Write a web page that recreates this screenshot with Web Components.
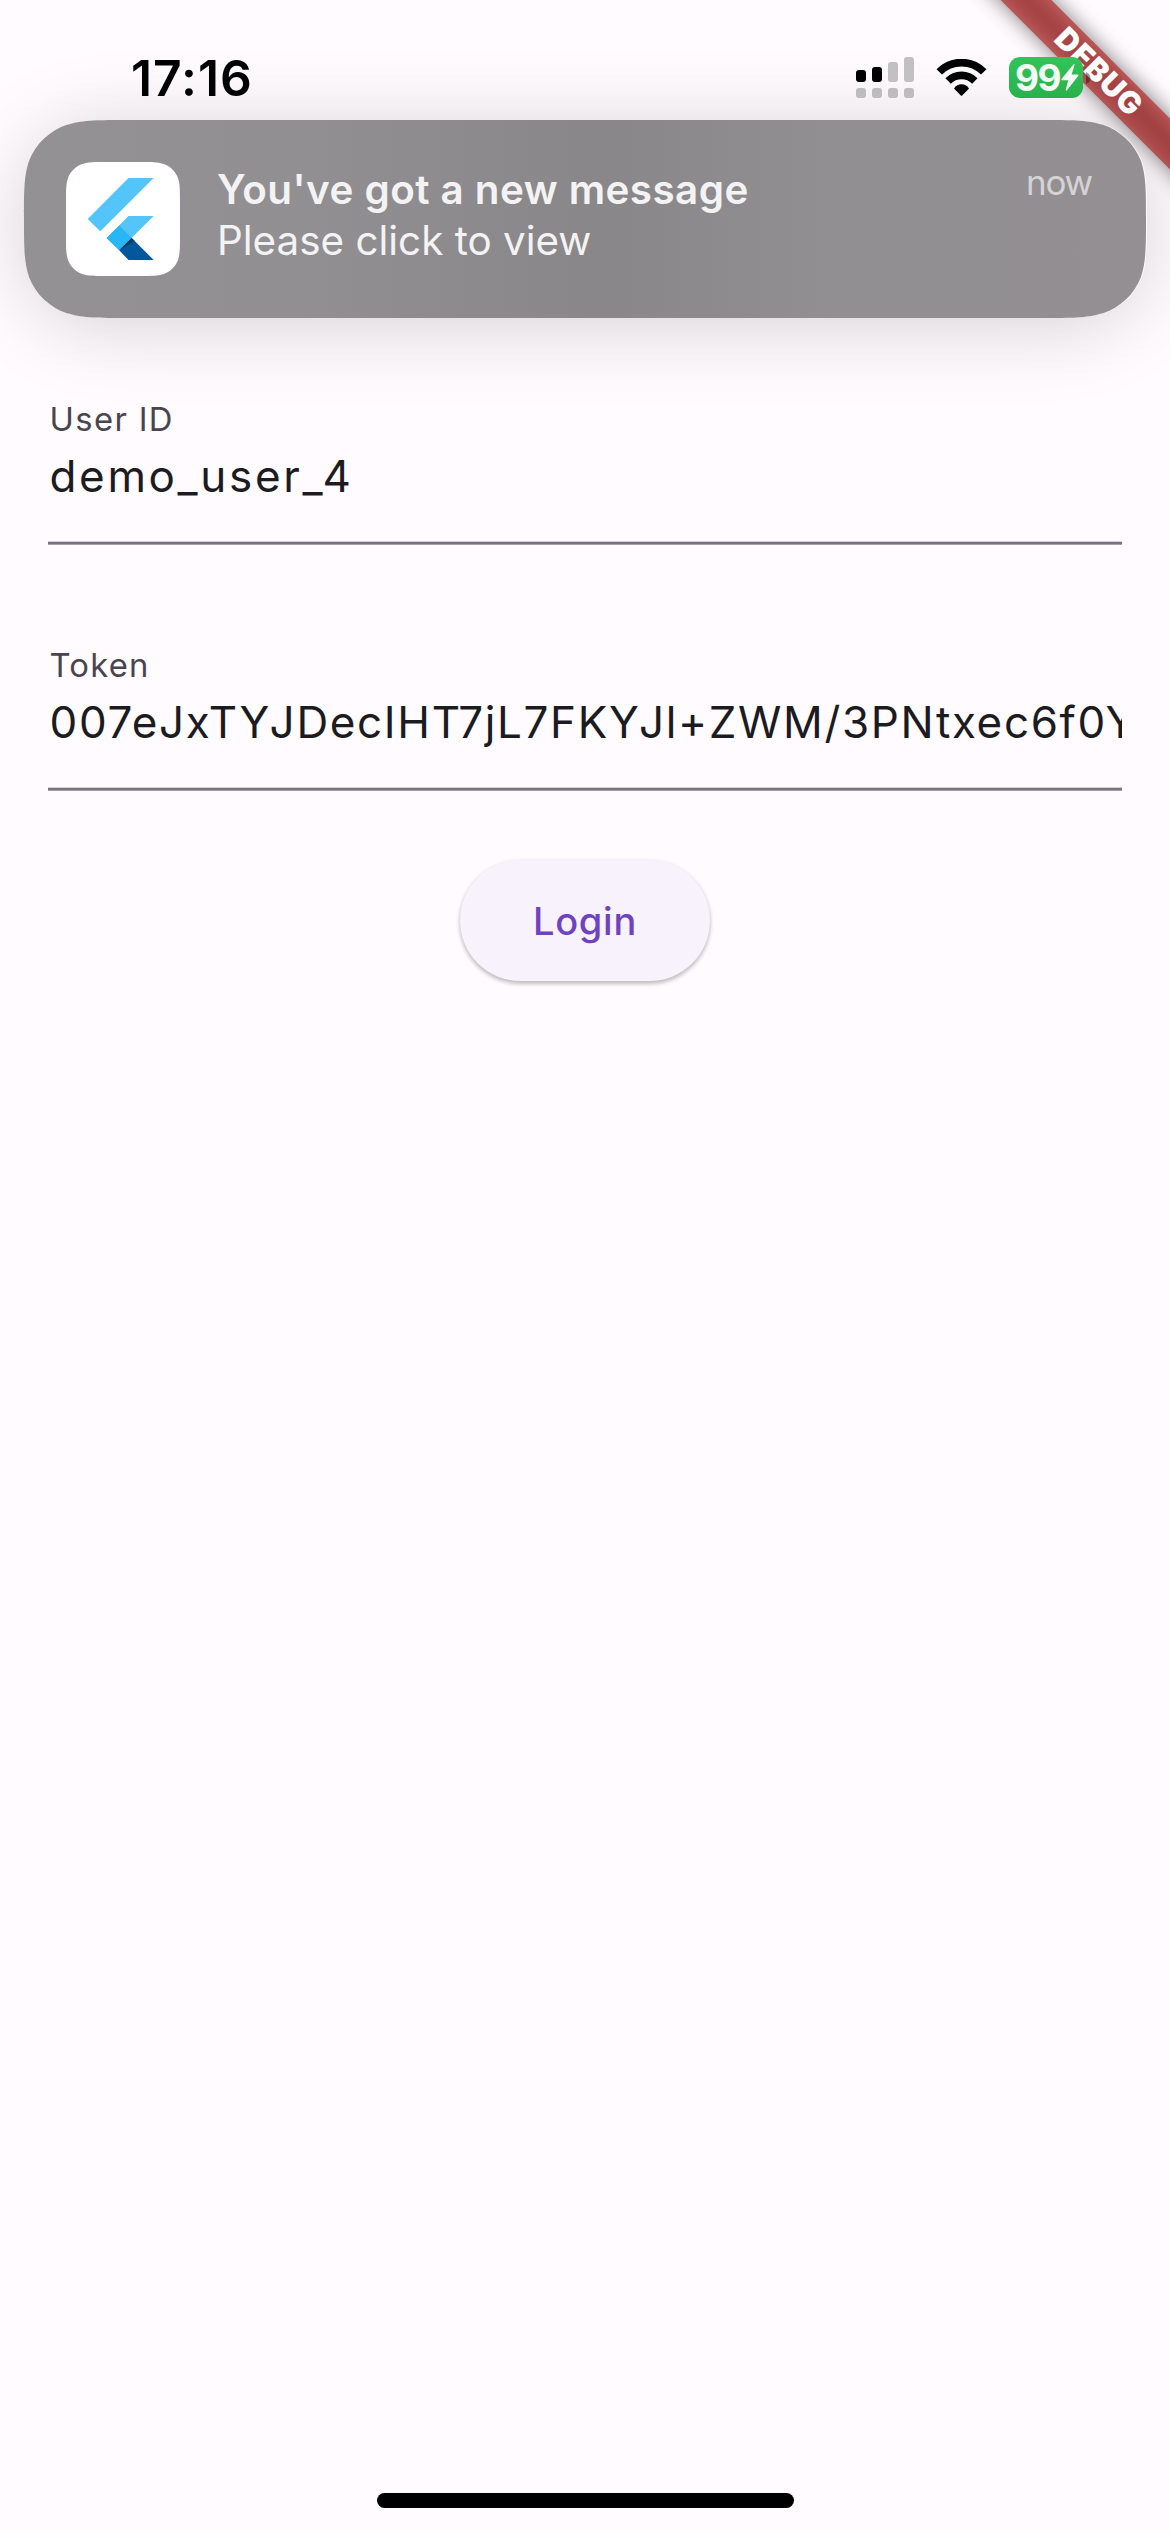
<!DOCTYPE html>
<html lang="en">
<head>
<meta charset="utf-8">
<title>Login</title>
<style>
html, body { margin: 0; padding: 0; }
body { width: 1170px; height: 2532px; overflow: hidden; font-family: Inter, "Liberation Sans", sans-serif; background: #fffbff; }
</style>
</head>
<body>
<phone-screen>
  <debug-banner slot="overlay">DEBUG</debug-banner>
  <status-bar time="17:16" battery="99"></status-bar>
  <push-notification heading="You've got a new message" when="now">Please click to view</push-notification>
  <login-form>
    <text-field label="User ID" tracking="2.65" label-tracking="1.35">demo_user_4</text-field>
    <text-field label="Token" tracking="1.64" label-tracking="1.2">007eJxTYJDecIHT7jL7FKYJl+ZWM/3PNtxec6f0Y</text-field>
    <elevated-button slot="action">Login</elevated-button>
  </login-form>
  <home-indicator></home-indicator>
</phone-screen>
<script>
function define(name, render) {
  customElements.define(name, class extends HTMLElement {
    connectedCallback() {
      if (this.shadowRoot) return;
      this.attachShadow({ mode: 'open' }).innerHTML = render(this);
    }
  });
}

// Rounded rectangle with continuous-curvature corners
function squircle(w, h, rx, ry) {
  const c = (fx, fy, a) => a.map(([x, y]) => {
    const px = x * rx, py = y * ry;
    return (fx ? w - px : px).toFixed(2) + ' ' + (fy ? h - py : py).toFixed(2);
  });
  const pts = [[1.5287, 0], [1.0885, 0], [0.8684, 0], [0.6699, 0.0655], [0.6315, 0.0749], [0.3728, 0.1691], [0.1691, 0.3728], [0.0749, 0.6315], [0, 0.8684], [0, 1.0885], [0, 1.5287]];
  const back = [...pts].reverse();
  const seg = p => p[0] + 'C' + p[1] + ' ' + p[2] + ' ' + p[3] + 'L' + p[4] + 'C' + p[5] + ' ' + p[6] + ' ' + p[7] + 'C' + p[8] + ' ' + p[9] + ' ' + p[10];
  const rev = p => p[0] + 'C' + p[1] + ' ' + p[2] + ' ' + p[3] + 'C' + p[4] + ' ' + p[5] + ' ' + p[6] + 'L' + p[7] + 'C' + p[8] + ' ' + p[9] + ' ' + p[10];
  return 'M' + seg(c(1, 0, pts)) + 'L' + rev(c(1, 1, back)) + 'L' + seg(c(0, 1, pts)) + 'L' + rev(c(0, 0, back)) + 'Z';
}

define('phone-screen', () => `
<style>
:host { display: flex; flex-direction: column; position: relative; width: 1170px; height: 2532px; overflow: hidden; background: #fffbff; }
</style>
<slot name="overlay"></slot><slot></slot>`);

define('debug-banner', () => `
<style>
:host { position: absolute; left: 898px; top: 54px; width: 400px; height: 36px; transform: rotate(45deg); }
.shade { position: absolute; inset: 0; background: rgba(0,0,0,.5); filter: blur(10.5px); }
.band { position: absolute; inset: 0; box-sizing: border-box; padding: 0 0 3px 1px; background: rgba(183,28,28,.63); display: flex; align-items: center; justify-content: center; color: #fff; font-size: 30.6px; font-weight: 900; line-height: 33px; letter-spacing: .7px; }
</style>
<div class="shade"></div><div class="band"><slot></slot></div>`);

define('status-bar', el => `
<style>
:host { display: flex; align-items: center; box-sizing: border-box; height: 120px; padding: 35px 79px 0 131px; position: relative; z-index: 2; }
.time { font-size: 49.8px; font-weight: 600; line-height: 60px; margin-top: 1px; color: #000; flex: 1; letter-spacing: 1px; }
svg { display: block; }
.signal { margin-right: 22px; }
.wifi { margin-right: 22px; }
.cell { display: flex; align-items: center; gap: 3px; }
.battery { display: flex; align-items: center; box-sizing: border-box; width: 74px; height: 41px; padding-left: 6px; border-radius: 11px; background: linear-gradient(#32c559, #28b14b); color: #f4fbf5; font-size: 37px; font-weight: 700; line-height: 41px; letter-spacing: -1.500px; }
.battery svg { margin-left: 1px; }
</style>
<span class="time">${el.getAttribute('time')}</span>
<svg class="signal" width="58" height="41" viewBox="0 0 58 41">
  <rect y="13" width="10" height="12" rx="3"/><rect x="16" y="10" width="10" height="15" rx="3"/>
  <g fill="#c3c0c4"><rect x="32" y="5" width="10" height="20" rx="3"/><rect x="48" width="10" height="25" rx="3"/></g>
  <g fill="#bfbcc0"><rect y="31" width="10" height="10" rx="3"/><rect x="16" y="31" width="10" height="10" rx="3"/><rect x="32" y="31" width="10" height="10" rx="3"/><rect x="48" y="31" width="10" height="10" rx="3"/></g>
</svg>
<svg class="wifi" width="51" height="37" viewBox="288 177 153 111">
  <g fill="none" stroke="#000"><path stroke-width="23" d="M297.8 215.5A94 94 0 0 1 431.2 215.5"/><path stroke-width="23" d="M324.5 243A56 56 0 0 1 404.5 243"/></g>
  <path d="M342 265.500Q351 253 364.500 253Q378 253 387 265.500L366.500 286.500Q364.500 288.500 362.500 286.500Z"/>
</svg>
<div class="cell">
  <div class="battery"><span>${el.getAttribute('battery')}</span><svg width="18" height="27" viewBox="0 0 18 27"><path fill="#f4fbf5" d="M12.600.3Q13.800-.2 13.500 1.200L10.600 10.600H16.600Q18 10.800 17.200 12L6 26.300Q4.700 27.300 4.700 25.700L7.300 16.300H1.200Q-.2 16 .7 14.800Z"/></svg></div>
  <svg width="5" height="12" viewBox="0 0 5 12"><path d="M0 0Q4.500 2 4.500 6T0 12Z" fill="#1d0000" fill-opacity=".42"/></svg>
</div>`);

define('push-notification', el => `
<style>
:host { display: flex; box-sizing: border-box; position: relative; z-index: 1; margin: 0 24px; height: 198px; padding: 42px 54px 0 42px; }
.glow { position: absolute; inset: 0; border-radius: 76px; box-shadow: 0 8px 80px rgba(0,0,0,.17); }
.card { position: absolute; left: 0; top: 0; overflow: visible; }
app-icon, .body, .when { position: relative; }
.body { flex: 1; margin-left: 37px; color: #f4f3f4; font-size: 40.4px; }
.title { font-weight: 600; line-height: 50px; margin-top: 3px; white-space: nowrap; letter-spacing: .45px; }
.text { line-height: 50px; margin-top: 1px; }
.when { font-size: 35px; line-height: 40px; color: #d6d3d6; letter-spacing: -1.2px; }
</style>
<div class="glow"></div>
<svg class="card" width="1122" height="198" viewBox="0 0 1122 198">
  <defs><linearGradient id="g"><stop offset="0" stop-color="#939194"/><stop offset=".25" stop-color="#918f92"/><stop offset=".5" stop-color="#898789"/><stop offset=".53" stop-color="#898789"/><stop offset=".72" stop-color="#918f92"/><stop offset="1" stop-color="#938f93"/></linearGradient></defs>
  <path d="${squircle(1122, 198, 68, 64.7)}" fill="#fff" fill-opacity=".8" transform="translate(1 0)"/>
  <path d="${squircle(1122, 198, 68, 64.7)}" fill="url(#g)"/>
</svg>
<app-icon></app-icon>
<div class="body"><div class="title">${el.getAttribute('heading')}</div><div class="text"><slot></slot></div></div>
<div class="when">${el.getAttribute('when')}</div>`);

define('app-icon', () => `
<style>:host { display: block; width: 114px; height: 114px; } svg { display: block; }</style>
<svg width="114" height="114" viewBox="198 366 342 342">
  <defs><linearGradient id="s" gradientUnits="userSpaceOnUse" x1="372" y1="614" x2="386" y2="630"><stop offset="0" stop-color="#0c3158"/><stop offset="1" stop-color="#01579b"/></linearGradient></defs>
  <g transform="translate(198 366)"><path fill="#fff" d="${squircle(342, 342, 77, 77)}"/></g>
  <path fill="#54c5f8" d="M385.500 414H461L301 574L263 537ZM385.500 528H461L357.500 631L320 594Z"/>
  <path fill="#29b6f6" d="M357.500 556.500L395 594L357.500 631L320 594Z"/>
  <path fill="#01579b" d="M395 594L461 660H385.500L357.500 631Z"/>
  <path fill="url(#s)" d="M395 594L405 604L357.500 631Z"/>
</svg>`);

define('login-form', () => `
<style>
:host { display: flex; flex-direction: column; flex: 1; padding: 81px 48px 0; }
.fields { display: flex; flex-direction: column; gap: 100px; }
.action { display: flex; justify-content: center; margin-top: 69px; }
</style>
<div class="fields"><slot></slot></div><div class="action"><slot name="action"></slot></div>`);

define('text-field', el => `
<style>
:host { display: block; height: 146px; }
.label { font-size: 32.8px; line-height: 40px; padding-left: 1.500px; color: #49454f; letter-spacing: ${el.getAttribute('label-tracking')}px; }
.value { font-size: 44px; line-height: 60px; margin-top: 7px; padding-left: 1.500px; color: #1c1b1f; letter-spacing: ${el.getAttribute('tracking')}px; white-space: nowrap; overflow: hidden; }
.line { height: 4px; margin-top: 35px; background: linear-gradient(#d3ced5 1px, #79747e 1px 3px, #a39ea7 3px); }
</style>
<div class="label">${el.getAttribute('label')}</div>
<div class="value"><slot></slot></div>
<div class="line"></div>`);

define('elevated-button', () => `
<style>
:host { display: flex; align-items: center; justify-content: center; width: 250px; height: 121px; border-radius: 61px; background: #f7f2fb; box-shadow: 0 3px 4px rgba(0,0,0,.2), 0 1px 5px rgba(0,0,0,.1); color: #6f43c0; font-size: 38px; font-weight: 500; letter-spacing: .7px; }
</style>
<slot></slot>`);

define('home-indicator', () => `
<style>
:host { display: flex; justify-content: center; padding: 0 0 24px 1px; }
div { width: 417px; height: 15px; border-radius: 8px; background: #000; }
</style>
<div></div>`);
</script>
</body>
</html>
